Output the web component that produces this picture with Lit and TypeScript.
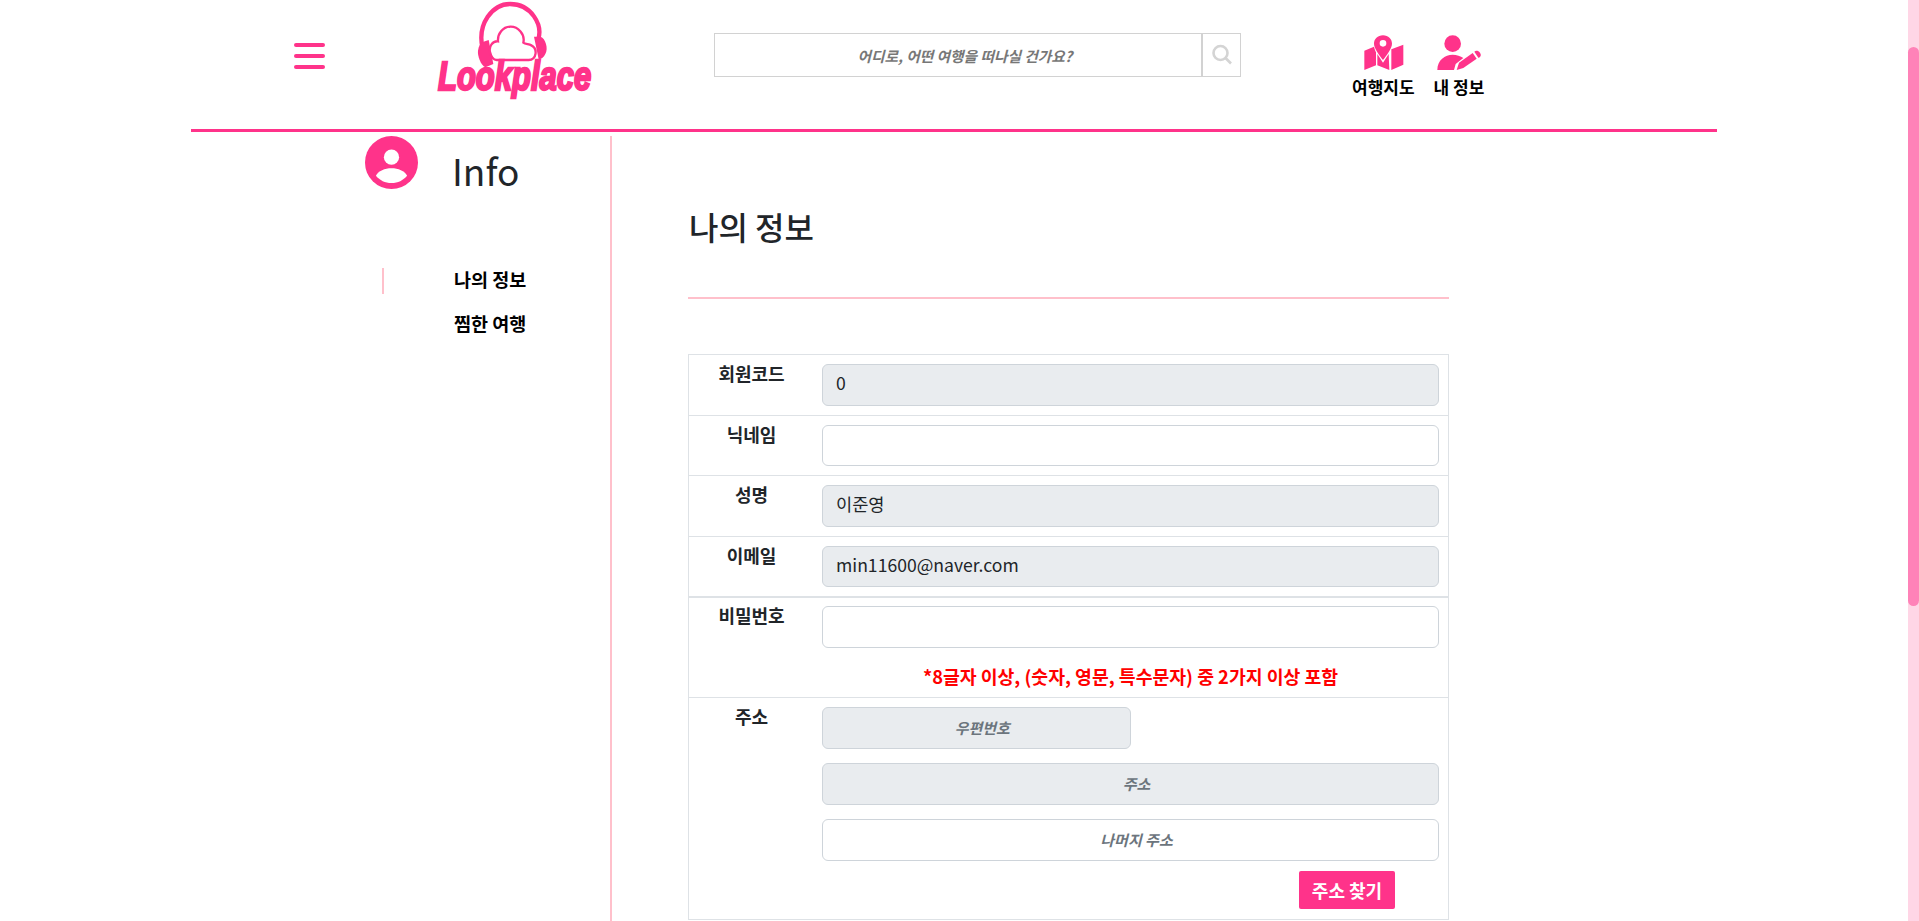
// Lookplace "my info" page
import { LitElement, html, css, svg } from 'lit';
import { customElement } from 'lit/decorators.js';

const headphones = svg`
  <path d="M44 146 C26 70 75 12 126 12 C190 12 226 75 210 120" fill="none" stroke="#ff338a" stroke-width="13"/>
  <path d="M42 127 L62 120 L76 192 L52 202 C38 196 28 165 30 152 C32 140 36 132 42 127 Z" fill="#ff338a"/>
  <path d="M198 110 L218 110 C232 114 242 146 232 162 C228 172 218 178 212 178 Z" fill="#ff338a"/>
  <path d="M86 180 L182 180 C206 180 210 146 190 136 C182 132 172 133 166 128 C172 102 150 80 128 80 C104 80 88 102 90 124 C74 122 62 140 66 156 C70 172 78 180 86 180 Z" fill="#fff" stroke="#ff338a" stroke-width="7"/>
`;

const mapIcon = svg`
  <path d="M55 64 L84 52 C86 60 88 64 90 69 L90 108 L55 122 Z"/>
  <path d="M94 74 L111 100 L128 74 L130 122 L94 108 Z"/>
  <path d="M136 60 L172 46 L172 106 L136 122 Z"/>
  <path fill-rule="evenodd" d="M111 18 C127 18 138 29 138 43 C138 58 120 80 111 92 C102 80 84 58 84 43 C84 29 95 18 111 18 Z M111 32 A10 10 0 1 0 111 52 A10 10 0 1 0 111 32 Z"/>
`;

const userIcon = svg`
  <circle cx="318" cy="43" r="25"/>
  <path d="M272 122 C272 92 295 76 318 76 C330 76 342 80 350 86 L327 104 L322 122 Z"/>
  <path d="M330 122 L337 100 L378 71 L390 88 L350 116 Z"/>
  <path d="M383 67 C388 63 395 64 400 70 C404 76 403 81 397 85 L395 85 Z"/>
`;

@customElement('app-root')
export class AppRoot extends LitElement {
  static override styles = css`
    :host {
      display: block;
      position: relative;
      height: 921px;
      overflow: hidden;
      background: #fff;
      color: #212529;
      font-family: 'Noto Sans CJK KR', 'Noto Sans', sans-serif;
      font-size: 16px;
    }
    .page {
      width: 1526px;
      margin-left: 191px;
    }
    .top {
      display: flex;
      height: 129px;
      border-bottom: 3px solid #ff338a;
    }
    .burger {
      display: flex;
      flex-direction: column;
      gap: 7px;
      width: 31px;
      margin: 43px 0 0 103px;
    }
    .burger span {
      height: 4px;
      border-radius: 2px;
      background: #ff338a;
    }
    .logo {
      width: 160px;
      margin-left: 113px;
    }
    .logo svg {
      display: block;
      width: 80px;
      height: 68px;
      margin-left: 34px;
    }
    .logo-text {
      display: block;
      margin-top: -13px;
      width: 200px;
      height: 42px;
      font: italic 700 40px/42px 'Liberation Sans', sans-serif;
      color: #ff338a;
      -webkit-text-stroke: 2.4px #ff338a;
      transform: scaleX(0.775);
      transform-origin: left top;
    }
    .search {
      display: flex;
      width: 527px;
      height: 44px;
      margin: 33px 0 0 116px;
      border: 1px solid #d2d2d2;
      box-sizing: border-box;
    }
    .search input {
      flex: 1;
      min-width: 0;
      border: 0;
      padding: 0 0 0 14px;
      text-align: center;
      font: inherit;
      font-size: 14.7px;
      font-weight: 700;
      font-style: italic;
      outline: none;
    }
    .search input::placeholder {
      color: #777;
    }
    .search button {
      width: 39px;
      padding: 0;
      border: 0;
      border-left: 2px solid #d2d2d2;
      background: #fff;
      display: flex;
      align-items: center;
      justify-content: center;
    }
    .links {
      display: flex;
      margin-left: 111px;
      gap: 19px;
    }
    .link {
      display: flex;
      flex-direction: column;
      align-items: center;
      font-size: 17px;
      font-weight: 700;
      color: #000;
      padding-top: 34px;
    }
    .link svg {
      display: block;
      width: 50px;
      height: 37px;
      fill: #ff338a;
    }
    .link span {
      margin-top: 7px;
      line-height: 18px;
      white-space: nowrap;
    }
    .body {
      display: flex;
      padding-top: 4px;
    }
    .side {
      box-sizing: border-box;
      width: 421px;
      height: 785px;
      border-right: 2px solid #ffc0cb;
    }
    .side-head {
      display: flex;
      align-items: flex-start;
      padding-left: 174px;
    }
    .side-head svg {
      display: block;
      width: 53px;
      height: 53px;
    }
    .side-head h1 {
      margin: 0 0 0 34px;
      padding-top: 8px;
      font-size: 37px;
      font-weight: 400;
      line-height: 52px;
    }
    .side ul {
      list-style: none;
      margin: 72px 0 0;
      padding: 0;
    }
    .side li {
      height: 26px;
      margin: 0 0 18px 191px;
      padding-left: 72px;
      font-size: 18.5px;
      font-weight: 700;
      color: #000;
      line-height: 22px;
    }
    .side li.on {
      border-left: 2px solid #ffc0cb;
      padding-left: 70px;
    }
    .main {
      width: 761px;
      margin-left: 76px;
    }
    .main h2 {
      margin: 0;
      padding: 67px 0 0 1px;
      height: 94px;
      font-size: 32px;
      font-weight: 500;
      line-height: 46px;
    }
    .rule {
      height: 2px;
      background: #ffc0cb;
      margin-bottom: 55px;
    }
    .rows {
      border: 1px solid #dee2e6;
      border-top: 0;
    }
    .row {
      display: grid;
      grid-template-columns: 125px 1fr;
      gap: 8px;
      border-top: 1px solid #dee2e6;
      padding: 9px 9px 9px 0;
    }
    .row.pw {
      border-top-width: 2px;
      padding-top: 8px;
    }
    .row label {
      text-align: center;
      font-size: 18px;
      font-weight: 700;
      line-height: 18px;
      color: #212529;
    }
    .row input {
      display: block;
      box-sizing: border-box;
      width: 100%;
      height: 41.6px;
      padding: 0 12px 4px 13px;
      border: 1px solid #ced4da;
      border-radius: 6px;
      background: #fff;
      font: inherit;
      font-size: 17.6px;
      color: #212529;
      outline: none;
    }
    .row input:disabled {
      background: #e9ecef;
    }
    .row input.ph {
      padding: 0 12px 0 24px;
      text-align: center;
      font-size: 15px;
      font-weight: 700;
      font-style: italic;
    }
    .row input.ph::placeholder {
      color: #6c757d;
    }
    .hint {
      margin-top: 16px;
      text-align: center;
      font-size: 18.3px;
      font-weight: 700;
      color: #f00;
      line-height: 24px;
    }
    .addr {
      display: flex;
      flex-direction: column;
    }
    .addr input + input {
      margin-top: 14.4px;
    }
    .addr input.half {
      width: 50%;
    }
    .addr button {
      align-self: flex-end;
      width: 96px;
      height: 38px;
      margin: 10px 44px 1px 0;
      border: 0;
      border-radius: 2px;
      padding: 0;
      background: #ff338a;
      color: #fff;
      font: inherit;
      font-size: 18px;
      font-weight: 700;
    }
    .bar {
      position: absolute;
      top: 0;
      right: 0;
      bottom: 0;
      width: 11px;
      background: #ffd6e6;
    }
    .thumb {
      position: absolute;
      top: 47px;
      left: 0;
      width: 11px;
      height: 559px;
      border-radius: 6px;
      background: #ff82b8;
    }
  `;

  override render() {
    return html`
      <div class="page">
        <header class="top">
          <div class="burger"><span></span><span></span><span></span></div>
          <div class="logo">
            <svg viewBox="12 0 240 204">${headphones}</svg>
            <span class="logo-text">Lookplace</span>
          </div>
          <div class="search">
            <input placeholder="어디로, 어떤 여행을 떠나실 건가요?" />
            <button aria-label="검색">
              <svg width="22" height="22" viewBox="0 0 22 22" fill="none" stroke="#d4d4d4" stroke-width="2.6">
                <circle cx="9.5" cy="9" r="7" />
                <path d="M14.5 14 L20 19.5" />
              </svg>
            </button>
          </div>
          <nav class="links">
            <div class="link">
              <svg viewBox="36 14 150 111">${mapIcon}</svg>
              <span>여행지도</span>
            </div>
            <div class="link">
              <svg viewBox="262 14 150 111">${userIcon}</svg>
              <span>내 정보</span>
            </div>
          </nav>
        </header>
        <div class="body">
          <aside class="side">
            <div class="side-head">
              <svg viewBox="0 0 16 16">
                <circle cx="8" cy="8" r="8" fill="#ff338a" />
                <circle cx="8" cy="6.4" r="2.3" fill="#fff" />
                <path d="M3.3 12 C4 10.5 6 9.7 8 9.7 C10 9.7 12 10.5 12.7 12 C11.5 13.4 10 14.2 8 14.2 C6 14.2 4.5 13.4 3.3 12 Z" fill="#fff" />
              </svg>
              <h1>Info</h1>
            </div>
            <ul>
              <li class="on">나의 정보</li>
              <li>찜한 여행</li>
            </ul>
          </aside>
          <main class="main">
            <h2>나의 정보</h2>
            <div class="rule"></div>
            <div class="rows">
              <div class="row"><label>회원코드</label><input disabled value="0" /></div>
              <div class="row"><label>닉네임</label><input /></div>
              <div class="row"><label>성명</label><input disabled value="이준영" /></div>
              <div class="row"><label>이메일</label><input disabled value="min11600@naver.com" /></div>
              <div class="row pw">
                <label>비밀번호</label>
                <div>
                  <input type="password" />
                  <div class="hint">*8글자 이상, (숫자, 영문, 특수문자) 중 2가지 이상 포함</div>
                </div>
              </div>
              <div class="row">
                <label>주소</label>
                <div class="addr">
                  <input class="ph half" disabled placeholder="우편번호" />
                  <input class="ph" disabled placeholder="주소" />
                  <input class="ph" placeholder="나머지 주소" />
                  <button>주소 찾기</button>
                </div>
              </div>
            </div>
          </main>
        </div>
      </div>
      <div class="bar"><div class="thumb"></div></div>
    `;
  }
}
